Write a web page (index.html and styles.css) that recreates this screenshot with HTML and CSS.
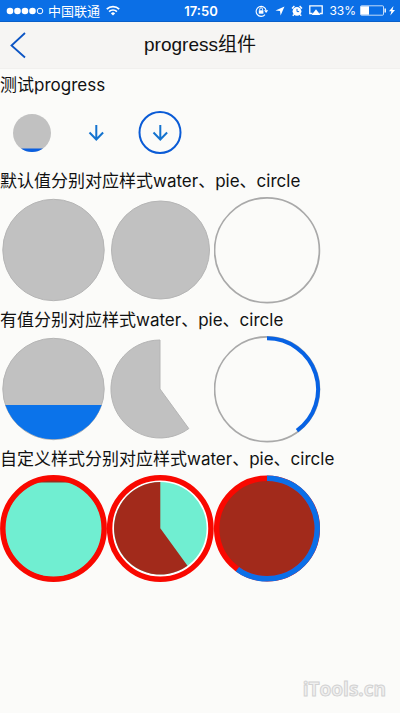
FILE: index.html
```html
<!DOCTYPE html>
<html lang="zh-CN">
<head>
<meta charset="utf-8">
<meta name="viewport" content="width=device-width, initial-scale=1">
<title>progress组件</title>
<link rel="stylesheet" href="styles.css">
</head>
<body>
<div class="status">
  <div class="status-left">
    <svg class="signal" width="38" height="10" viewBox="0 0 38 10" aria-hidden="true">
      <g fill="#fff"><circle cx="4" cy="5" r="3.3"/><circle cx="11.5" cy="5" r="3.3"/><circle cx="19" cy="5" r="3.3"/><circle cx="26.5" cy="5" r="3.3"/></g>
      <circle cx="34" cy="5" r="2.8" fill="none" stroke="#fff"/>
    </svg>
    <span class="carrier">中国联通</span>
    <svg width="14" height="11" viewBox="0 0 14 11" aria-hidden="true">
      <g fill="none" stroke="#fff" stroke-width="1.7"><path d="M.8 4.1a8.8 8.8 0 0 1 12.4 0"/><path d="M3.1 6.6a5.5 5.5 0 0 1 7.8 0"/></g>
      <path d="M7 10.6 4.9 8.4a3 3 0 0 1 4.2 0z" fill="#fff"/>
    </svg>
  </div>
  <span class="clock">17:50</span>
  <div class="status-right">
    <svg width="14" height="12" viewBox="0 0 14 12" aria-hidden="true">
      <path d="M10 9.6A5 5 0 1 1 11.1 5.5" fill="none" stroke="#fff" stroke-width="1.1"/>
      <path d="M9 5.2h4.2L11.1 8z" fill="#fff"/><rect x="3.8" y="5.3" width="4.6" height="3.4" fill="#fff"/>
      <path d="M4.7 5.4V4.2a1.4 1.4 0 0 1 2.8 0v1.2" fill="none" stroke="#fff"/>
    </svg>
    <svg width="10" height="10" viewBox="0 0 10 10" aria-hidden="true"><path d="M9.5.5 5.6 9.6 5 5 .5 4.5z" fill="#fff"/></svg>
    <svg width="12" height="12" viewBox="0 0 12 12" aria-hidden="true">
      <circle cx="6" cy="6.3" r="4.4" fill="#fff"/><path d="M1 3.4 3.4 1M11 3.4 8.6 1M2.8 9.5l-1 1.3M9.2 9.5l1 1.3" stroke="#fff" stroke-width="1.4"/>
      <path d="M6 3.8v2.8h2.1" fill="none" stroke="#0b6fe6"/>
    </svg>
    <svg width="14" height="11" viewBox="0 0 14 11" aria-hidden="true">
      <path d="M3.5 8.5H.8V.8h12.4v7.7h-2.7" fill="none" stroke="#fff" stroke-width="1.3"/><path d="M7 4.3 11.4 10H2.6z" fill="#fff"/>
    </svg>
    <span class="percent">33%</span>
    <svg width="36" height="11" viewBox="0 0 36 11" aria-hidden="true">
      <rect x=".5" y=".8" width="23" height="9.4" rx="1" fill="none" stroke="#fff" stroke-opacity=".75"/><rect x="1" y="1.3" width="8" height="8.4" fill="#fff"/>
      <path d="M24.5 3.5h1.4v4h-1.4z" fill="#fff"/><path d="M33.5 1 29 6.3h2.4L30.3 10.6 35 5h-2.5z" fill="#fff"/>
    </svg>
  </div>
</div>
<header class="nav">
  <button class="back" aria-label="返回">
    <svg width="16" height="28" viewBox="0 0 16 28" aria-hidden="true"><path d="M15 2 1.5 14.5 15 26.5" fill="none" stroke="#0c55c4" stroke-width="1.8"/></svg>
  </button>
  <h1>progress组件</h1>
</header>
<main>
  <h2>测试progress</h2>
  <div class="row small">
    <svg viewBox="0 0 64 64" role="img" aria-label="water">
      <circle cx="32" cy="32" r="19" fill="#c1c1c1"/><path d="M21 47.5h22a19 19 0 0 1-22 0z" fill="#0a5fe0"/>
    </svg>
    <svg viewBox="0 0 64 64" role="img" aria-label="pie"><path class="arrow" d="M32.3 24v15M25.5 31.5l6.8 7 6.8-7"/></svg>
    <svg viewBox="0 0 64 64" role="img" aria-label="circle">
      <circle cx="32" cy="31.5" r="20.5" fill="none" stroke="#0a5bd6" stroke-width="2"/><path class="arrow" d="M32.3 24v15M25.5 31.5l6.8 7 6.8-7"/>
    </svg>
  </div>
  <h2>默认值分别对应样式water、pie、circle</h2>
  <div class="row">
    <svg viewBox="0 0 107 107" role="img" aria-label="water"><circle class="base" cx="53.5" cy="53" r="50.7"/></svg>
    <svg viewBox="0 0 107 107" role="img" aria-label="pie"><circle class="base" cx="53.5" cy="53" r="49"/></svg>
    <svg viewBox="0 0 107 107" role="img" aria-label="circle"><circle class="ring" cx="53" cy="53.3" r="52.4"/></svg>
  </div>
  <h2>有值分别对应样式water、pie、circle</h2>
  <div class="row">
    <svg viewBox="0 0 107 107" role="img" aria-label="water">
      <circle class="base" cx="53.5" cy="53" r="50.7"/><path d="M5.3 69h96.4a51 51 0 0 1-96.4 0z" fill="#0b73ea"/>
    </svg>
    <svg viewBox="0 0 107 107" role="img" aria-label="pie"><path class="base" d="M53 53V4a49 49 0 1 0 28.8 88.6z"/></svg>
    <svg viewBox="0 0 107 107" role="img" aria-label="circle">
      <circle class="ring" cx="53" cy="53.3" r="52.4"/><path d="M53 2.3a51 51 0 0 1 30 92.3" fill="none" stroke="#0762e4" stroke-width="4"/>
    </svg>
  </div>
  <h2>自定义样式分别对应样式water、pie、circle</h2>
  <div class="row">
    <svg viewBox="0 0 107 107" role="img" aria-label="water">
      <circle cx="53.5" cy="53.5" r="50" fill="#a22a1b"/><path d="M37.5 7.5h32a48.7 48.7 0 1 1-32 0z" fill="#70eed1"/>
      <circle cx="53.5" cy="53.5" r="50.7" fill="none" stroke="#f90800" stroke-width="5.5"/>
    </svg>
    <svg viewBox="0 0 107 107" role="img" aria-label="pie">
      <circle cx="53.3" cy="53.5" r="50.7" fill="#fff" stroke="#f90800" stroke-width="5.5"/>
      <circle cx="53.3" cy="53.3" r="46.3" fill="#70eed1"/><path d="M53.3 53.3V7a46.3 46.3 0 1 0 27.2 83.8z" fill="#a22a1b"/>
    </svg>
    <svg viewBox="0 0 107 107" role="img" aria-label="circle">
      <circle cx="53" cy="53.5" r="50.3" fill="#a22a1b" stroke="#f90800" stroke-width="5.5"/>
      <path d="M53 3.2a50.3 50.3 0 1 1-29.6 91" fill="none" stroke="#0b6fe8" stroke-width="5.5"/>
    </svg>
  </div>
</main>
<footer>iTools.cn</footer>
</body>
</html>
```
FILE: styles.css
```css
* {
  box-sizing: border-box;
}

body {
  margin: 0;
  min-height: 100vh;
  display: flex;
  flex-direction: column;
  background: #fbfbf9;
  color: #111;
  font-family: Inter, "Noto Sans CJK SC", sans-serif;
}

svg {
  display: block;
  flex: none;
}

.status {
  display: grid;
  grid-template-columns: 1fr auto 1fr;
  align-items: center;
  height: 22px;
  padding: 0 4px 0 6px;
  background: #0b6fe6;
  border-bottom: 1px solid #0a5fc8;
  color: #fff;
  font-size: 13px;
  line-height: 20px;
}

.status-left,
.status-right {
  display: flex;
  align-items: center;
  gap: 4px;
}

.status-left .carrier {
  margin-right: 2px;
}

.status-right {
  justify-content: flex-end;
  gap: 6px;
}

.percent {
  margin-right: -2px;
  font-size: 12px;
}

.clock {
  font-size: 13px;
  font-weight: 600;
}

.nav {
  display: grid;
  grid-template-columns: 40px 1fr 40px;
  align-items: center;
  height: 47px;
  background: #f6f5f3;
  border-bottom: 1px solid #f1f0ee;
}

.back {
  padding: 0 0 0 10px;
  border: 0;
  background: none;
}

h1 {
  margin: 0;
  text-align: center;
  font-family: "Liberation Sans", "Noto Sans CJK SC", sans-serif;
  font-size: 19px;
  font-weight: 400;
  line-height: 28px;
}

main {
  flex: 1;
}

h2 {
  margin: 0;
  font-size: 17px;
  font-weight: 400;
  line-height: 32px;
  white-space: nowrap;
}

.row {
  display: flex;
}

.row svg {
  width: 107px;
  height: 107px;
}

.row.small svg {
  width: 64px;
  height: 64px;
}

.base {
  fill: #c1c1c1;
  stroke: #b5b5b5;
  stroke-width: 1;
}

.ring {
  fill: none;
  stroke: #a9a9a9;
  stroke-width: 1.7;
}

.arrow {
  fill: none;
  stroke: #1473cf;
  stroke-width: 2;
}

footer {
  padding: 0 14px 12px;
  text-align: right;
  color: #f0f0f0;
  font-family: "Open Sans", sans-serif;
  font-size: 19px;
  font-weight: 700;
  line-height: 24px;
  -webkit-text-stroke: 1px #d2d2d2;
}
```
